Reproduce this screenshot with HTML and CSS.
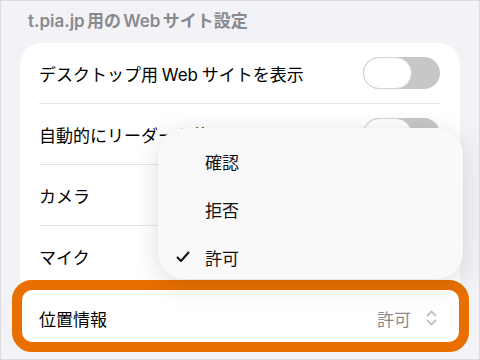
FILE: index.html
```html
<!DOCTYPE html>
<html lang="ja">
<head>
<meta charset="utf-8">
<link rel="stylesheet" href="styles.css">
</head>
<body>
<div class="screen">
  <div class="header">t.pia.jp 用の Web サイト設定</div>
  <div class="card">
    <div class="row">
      <span class="label">デスクトップ用 Web サイトを表示</span>
      <span class="toggle"><span class="knob"></span></span>
    </div>
    <div class="row">
      <span class="label">自動的にリーダーを使用</span>
      <span class="toggle"><span class="knob"></span></span>
    </div>
    <div class="row">
      <span class="label">カメラ</span>
      <span class="value">許可</span>
    </div>
    <div class="row">
      <span class="label">マイク</span>
      <span class="value">許可</span>
    </div>
    <div class="row last highlighted">
      <span class="label">位置情報</span>
      <span class="value">許可
        <svg class="chev" width="11" height="16" viewBox="0 0 11 16"><path d="M1.5 5.5 L5.5 1.5 L9.5 5.5 M1.5 10.5 L5.5 14.5 L9.5 10.5" fill="none" stroke="#c2c2c6" stroke-width="1.8" stroke-linecap="round" stroke-linejoin="round"/></svg>
      </span>
    </div>
  </div>
  <div class="menu">
    <div class="item"><span class="check"></span><span>確認</span></div>
    <div class="item"><span class="check"></span><span>拒否</span></div>
    <div class="item"><span class="check"><svg width="14" height="12" viewBox="0 0 14 12"><path d="M1.5 6.5 L5 10 L12.5 1.5" fill="none" stroke="#111" stroke-width="2" stroke-linecap="round" stroke-linejoin="round"/></svg></span><span>許可</span></div>
  </div>
</div>
</body>
</html>
```
FILE: styles.css
```css
* { box-sizing: border-box; }
html, body { margin: 0; padding: 0; }
body {
  font-family: Inter, "Noto Sans CJK JP", "Noto Sans", sans-serif;
  background: #f2f2f7;
}
.screen {
  position: relative;
  width: 480px;
  height: 360px;
  overflow: hidden;
  background: #f2f2f7;
  border: 1px solid #dcdce0;
  padding-top: 6px;
}
.header {
  padding-left: 27px;
  font-size: 17px;
  font-weight: 600;
  color: #8a8a8e;
  height: 28px;
  line-height: 28px;
  word-spacing: -2px;
}
.card {
  margin: 8px 19px 0 19px;
  background: #fff;
  border-radius: 22px;
  padding: 0 20px 0 19px;
}
.row {
  position: relative;
  display: flex;
  align-items: center;
  justify-content: space-between;
  height: 61px;
  border-bottom: 1px solid #e4e4e8;
  font-size: 17px;
  color: #000;
}
.row.last { border-bottom: none; height: 62px; }
.label { word-spacing: -1px; white-space: nowrap; }
.value {
  display: flex;
  align-items: center;
  gap: 15px;
  color: #8a8a8e;
  margin-right: 3px;
}
.toggle {
  width: 77px;
  height: 32px;
  border-radius: 16px;
  background: #c7c7c9;
  display: flex;
}
.knob {
  width: 49px;
  height: 32px;
  border-radius: 16px;
  background: #fff;
  border: 1.5px solid #d2d2d4;
}
.highlighted::after {
  content: "";
  position: absolute;
  left: -27px;
  right: -29px;
  top: -7px;
  bottom: -3px;
  border: 10.5px solid #e97000;
  border-radius: 20px;
}
.menu {
  position: absolute;
  left: 157px;
  top: 127px;
  width: 305px;
  height: 151px;
  background: #f9f9fa;
  border-radius: 26px;
  box-shadow: 0 6px 28px rgba(0,0,0,0.13), 0 0 2px rgba(0,0,0,0.05);
  padding-top: 9px;
}
.item {
  display: flex;
  align-items: center;
  height: 48px;
  font-size: 17px;
  color: #111;
}
.check {
  width: 47px;
  padding-left: 18px;
  display: flex;
  align-items: center;
}
```
